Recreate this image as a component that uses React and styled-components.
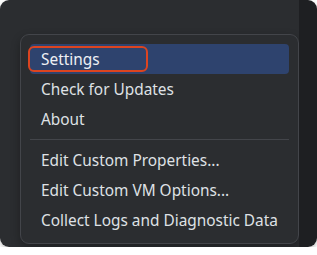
import styled, { createGlobalStyle } from 'styled-components';

const GlobalStyle = createGlobalStyle`
html, body {
  margin: 0;
  padding: 0;
  background: #ffffff;
}
body {
  font-family: "Noto Sans", "Open Sans", sans-serif;
}
`

const Window = styled.div`
width: 317px;
height: 247px;
display: flex;
border-radius: 9px;
overflow: hidden;
box-shadow: 0px 2px 4px rgba(0, 0, 0, 0.25);
`

const Main = styled.div`
flex: 1;
background: #2b2d30;
padding: 34px 0 0 20px;
`

const SideStrip = styled.div`
width: 37px;
background: #1e1f22;
`

const Menu = styled.div`
width: 279px;
height: 210px;
box-sizing: border-box;
padding: 9px 9px 0 9px;
background: #2b2d30;
border: 1px solid #43454a;
border-radius: 9px;
box-shadow: 0px 4px 10px rgba(0, 0, 0, 0.3);
`

const Item = styled.div`
height: 30px;
display: flex;
align-items: center;
padding-left: 11px;
border-radius: 4px;
background: ${p => (p.$active ? '#2e436e' : 'transparent')};
color: ${p => (p.$active ? '#eef0f4' : '#dfe1e5')};
font-size: 15.4px;
white-space: nowrap;
`

// red outline drawn around the selected entry
const Marked = styled.span`
position: relative;
&::after {
  content: '';
  position: absolute;
  left: -13px;
  right: -48px;
  top: -3px;
  bottom: -2px;
  border: 2px solid #dc4420;
  border-radius: 6px;
}
`

const Separator = styled.div`
height: 1px;
background: #43454a;
margin: 5px 0;
`

function App() {
    return (
        <>
            <GlobalStyle />
            <Window>
                <Main>
                    <Menu>
                        <Item $active><Marked>Settings</Marked></Item>
                        <Item>Check for Updates</Item>
                        <Item>About</Item>
                        <Separator />
                        <Item>Edit Custom Properties...</Item>
                        <Item>Edit Custom VM Options...</Item>
                        <Item>Collect Logs and Diagnostic Data</Item>
                    </Menu>
                </Main>
                <SideStrip />
            </Window>
        </>
    );
};

export default App;
